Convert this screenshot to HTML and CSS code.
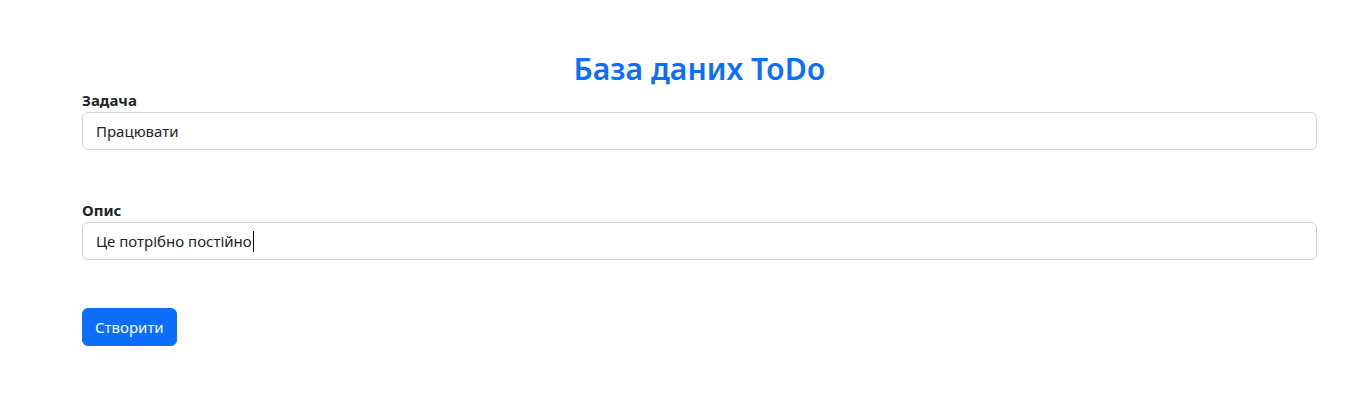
FILE: index.html
```html
<!DOCTYPE html>
<html lang="uk">
<head>
<meta charset="utf-8">
<title>База даних ToDo</title>
<link rel="stylesheet" href="styles.css">
</head>
<body>
<main class="page">
  <h1 class="title">База даних ToDo</h1>
  <form class="todo-form">
    <div class="field">
      <label class="field-label">Задача</label>
      <div class="field-input">Працювати</div>
    </div>
    <div class="field">
      <label class="field-label">Опис</label>
      <div class="field-input">Це потрібно постійно<span class="caret"></span></div>
    </div>
    <button type="button" class="btn-primary">Створити</button>
  </form>
</main>
</body>
</html>
```
FILE: styles.css
```css
* { box-sizing: border-box; }
body {
  margin: 0;
  background: #fff;
  color: #212529;
  font-family: "Noto Sans", "Open Sans", sans-serif;
  font-size: 16px;
  line-height: 1.5;
}
.page {
  padding: 50px 40px 0 82px;
}
.title {
  margin: 0;
  text-align: center;
  color: #0d6efd;
  font-size: 30.2px;
  font-weight: 600;
  line-height: 38px;
}
.field {
  margin-bottom: 48px;
}
.field-label {
  display: block;
  font-weight: 700;
  font-size: 15px;
  line-height: 24px;
}
.field-input {
  display: flex;
  align-items: center;
  height: 38px;
  padding: 0 13px;
  border: 1px solid #ced4da;
  border-radius: 6px;
  font-size: 15px;
  color: #212529;
}
.caret {
  display: inline-block;
  width: 1px;
  height: 21px;
  background: #000;
  margin-left: 1px;
}
.btn-primary {
  display: block;
  height: 38px;
  padding: 0 12px;
  border: 1px solid #0d6efd;
  border-radius: 6px;
  background: #0d6efd;
  color: #fff;
  font-family: inherit;
  font-size: 15px;
  cursor: pointer;
}
```
